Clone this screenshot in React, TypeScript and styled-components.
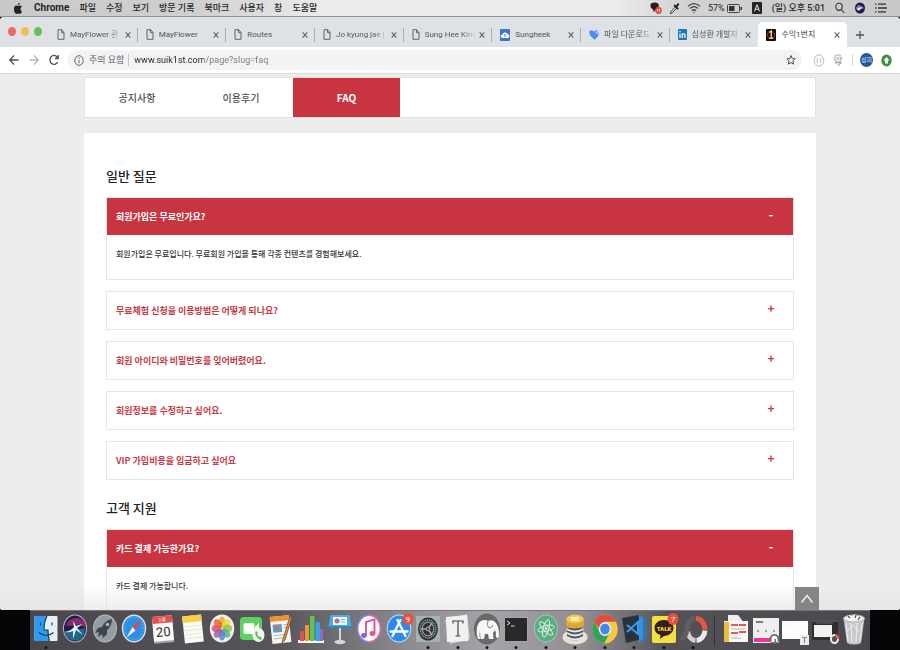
import React, { useState } from "react";
import styled, { createGlobalStyle, css } from "styled-components";

const GlobalStyle = createGlobalStyle`
  *, *::before, *::after { box-sizing: border-box; }
  html, body, #root { height: 100%; }
  body {
    margin: 0;
    overflow: hidden;
    background: #060407;
    font-family: Roboto, "Noto Sans CJK KR", sans-serif;
  }
  button { margin: 0; padding: 0; border: 0; background: none; font: inherit; color: inherit; }
  a { color: inherit; text-decoration: none; }
  svg { display: block; flex: none; }
`;

const Desktop = styled.div`
  display: flex;
  flex-direction: column;
  height: 100vh;
  background: #060407;
`;

/* ---------- menu bar ---------- */

const MenuBar = styled.header`
  display: flex;
  align-items: center;
  justify-content: space-between;
  height: 17px;
  flex: none;
  padding: 0 13px 0 12px;
  background: linear-gradient(90deg, #c9c9c9, #d0d0d0 22%, #ececec 36%, #ededed 68%, #d2d2d2 76%, #c8c8c8);
  border-bottom: 1px solid #8d9390;
  color: #262626;
  font-size: 9px;
  line-height: 16px;
`;

const MenuGroup = styled.nav<{ $gap: number }>`
  display: flex;
  align-items: center;
  gap: ${(p) => p.$gap}px;
  white-space: nowrap;
`;

const MenuItem = styled.button<{ $app?: boolean }>`
  font-size: ${(p) => (p.$app ? 10 : 9)}px;
  font-weight: ${(p) => (p.$app ? 700 : 500)};
  line-height: 16px;
`;

const Battery = styled.span`
  display: flex;
  align-items: center;
  gap: 2px;
`;

/* ---------- browser window ---------- */

const BrowserWindow = styled.div`
  display: flex;
  flex-direction: column;
  flex: 1;
  min-height: 0;
  overflow: hidden;
  border-radius: 4px 4px 3px 3px;
  background: #fff;
`;

const TabStrip = styled.div`
  display: flex;
  height: 30px;
  flex: none;
  padding-top: 5px;
  background: #dee1e6;
`;

const Lights = styled.div`
  display: flex;
  gap: 5px;
  width: 49px;
  flex: none;
  padding: 5px 0 0 8px;
`;

const Light = styled.button<{ $color: string }>`
  width: 8px;
  height: 9px;
  border-radius: 50%;
  background: ${(p) => p.$color};
`;

const TabList = styled.div`
  display: flex;
  flex: 1;
  min-width: 0;
`;

const Tab = styled.div<{ $active?: boolean; $rule?: boolean }>`
  display: flex;
  align-items: center;
  flex: 1 1 0;
  min-width: 0;
  padding: 0 6px 0 8px;
  color: #55585d;
  ${(p) =>
    p.$rule &&
    css`
      background: linear-gradient(#a9adb2, #a9adb2) right 6px / 1px 14px no-repeat;
    `}
  ${(p) =>
    p.$active &&
    css`
      background: #fff;
      color: #3c4043;
      border-radius: 5px 5px 0 0;
    `}
`;

const TabTitle = styled.button<{ $faded?: boolean }>`
  flex: 1;
  min-width: 0;
  margin: 0 1px 0 5px;
  overflow: hidden;
  white-space: nowrap;
  text-align: left;
  font-size: 8px;
  line-height: 14px;
  ${(p) => p.$faded && css`mask-image: linear-gradient(90deg, #000 70%, transparent);`}
`;

const CloseButton = styled.button`
  width: 8px;
  height: 10px;
  flex: none;
`;

const NewTab = styled.button`
  display: grid;
  place-items: center;
  width: 26px;
  height: 25px;
  margin-right: 27px;
  flex: none;
`;

const Toolbar = styled.div`
  display: flex;
  align-items: center;
  height: 27px;
  flex: none;
  padding: 0 8px;
  background: #fff;
  border-bottom: 1px solid #dcdcdc;
`;

const NavButtons = styled.div`
  display: flex;
  gap: 8px;
  width: 59px;
  flex: none;
`;

const AddressBar = styled.div`
  display: flex;
  align-items: center;
  flex: 1;
  min-width: 0;
  height: 20px;
  padding: 0 6px 0 7px;
  border-radius: 10px;
  background: #f1f3f4;
`;

const SiteInfo = styled.button`
  display: flex;
  align-items: center;
  gap: 5px;
  padding-right: 4px;
  border-right: 1px solid #c3c5c8;
  color: #5f6368;
  font-size: 9px;
  line-height: 12px;
  white-space: nowrap;
`;

const UrlInput = styled.input`
  flex: 1;
  min-width: 0;
  margin: 0 0 0 5px;
  padding: 0;
  border: 0;
  outline: 0;
  font: 9px/16px Roboto, sans-serif;
  color: transparent;
  background: linear-gradient(90deg, #202124 70px, #75787c 70px);
  -webkit-background-clip: text;
  background-clip: text;
`;

const Extensions = styled.div`
  display: flex;
  align-items: center;
  gap: 8px;
  padding-left: 11px;
`;

const Rule = styled.span`
  width: 1px;
  height: 12px;
  margin: 0 -1px 0 1px;
  background: #d5d7d9;
`;

const Profile = styled.button`
  width: 13px;
  height: 14px;
  border-radius: 50%;
  background: #2259a0;
  color: #d9e6f5;
  font-size: 6px;
  line-height: 14px;
`;

/* ---------- web page ---------- */

const Page = styled.main`
  position: relative;
  flex: 1;
  min-height: 0;
  overflow: hidden;
  padding: 3px 84px 0;
  background: #ededed;
  font-family: "Noto Sans CJK KR", sans-serif;
  &::after {
    content: "";
    position: absolute;
    inset: auto 0 0;
    height: 26px;
    background: linear-gradient(rgba(226, 226, 226, 0), rgba(226, 226, 226, 0.6));
    pointer-events: none;
  }
`;

const SectionNav = styled.nav`
  display: flex;
  height: 41px;
  border: 1px solid #e2e2e2;
  background: #fff;
`;

const SectionLink = styled.a<{ $active?: boolean }>`
  display: grid;
  place-items: center;
  width: ${(p) => (p.$active ? 107 : 104)}px;
  background: ${(p) => (p.$active ? "#c83541" : "transparent")};
  color: ${(p) => (p.$active ? "#fff" : "#505050")};
  font-size: 10px;
  font-weight: ${(p) => (p.$active ? 700 : 500)};
  line-height: 16px;
`;

const Panel = styled.section`
  margin-top: 15px;
  padding: 31px 22px 60px;
  background: #fff;
`;

const GroupTitle = styled.h2`
  margin: 0;
  padding-bottom: 9px;
  color: #222;
  font-size: 13px;
  font-weight: 500;
  line-height: 24px;
`;

const Group = styled.div`
  & + & { margin-top: 16px; }
`;

const Items = styled.div`
  display: flex;
  flex-direction: column;
  gap: 11px;
`;

const Item = styled.div`
  border: 1px solid #e6e6e6;
`;

const Question = styled.button<{ $open: boolean }>`
  display: flex;
  align-items: center;
  justify-content: space-between;
  width: 100%;
  height: 37px;
  padding: 0 18px 0 9px;
  background: ${(p) => (p.$open ? "#c83541" : "#fff")};
  color: ${(p) => (p.$open ? "#fff" : "#c83c46")};
  font-size: 9px;
  font-weight: 700;
  line-height: 16px;
  text-align: left;
`;

const Sign = styled.span`
  width: 8px;
  padding-bottom: 5px;
  font-size: 12px;
  text-align: center;
`;

const Answer = styled.p`
  margin: 0;
  padding: 10px 9px 17px;
  color: #333;
  font-size: 8px;
  font-weight: 500;
  line-height: 17px;
`;

const TopButton = styled.button`
  position: absolute;
  right: 81px;
  bottom: 0;
  z-index: 1;
  display: grid;
  place-items: center;
  width: 24px;
  height: 23px;
  background: #858585;
`;

/* ---------- dock ---------- */

const Dock = styled.nav`
  display: flex;
  height: 40px;
  flex: none;
  margin: 0 30px;
  padding: 0 1px;
  border-top: 1px solid #77757a;
  background: linear-gradient(90deg, #4a474c, #59565b 30%, #8d8a90 45%, #a5a2a8 55%, #908d92 66%, #555257 76%, #4b484d);
`;

const DockItem = styled.button`
  display: flex;
  justify-content: center;
  flex: 1 1 0;
  min-width: 0;
`;

const DockDivider = styled.span`
  width: 14px;
  flex: none;
  background: linear-gradient(#353337, #353337) center 5px / 1px 30px no-repeat;
`;

/* ---------- small icons ---------- */

const DocIcon = () => (
  <svg width="8" height="11" viewBox="0 0 8 11" fill="none" stroke="#5f6368" strokeWidth="1">
    <path d="M1 .7h3.6L7 3.4v6.9H1zM4.5.8v2.9H7" />
  </svg>
);
const CloudIcon = () => (
  <svg width="10" height="12" viewBox="0 0 10 12">
    <rect width="10" height="12" rx="1" fill="#3978c6" />
    <path d="M2.5 9a1.8 1.8 0 0 1 0-3.6A2.6 2.6 0 0 1 7.3 5 2 2 0 0 1 7.5 9z" fill="#fff" />
    <path d="M5 8V5.6M4 6.6l1-1.2 1 1.2" stroke="#3978c6" strokeWidth=".8" fill="none" />
  </svg>
);
const BirdIcon = () => (
  <svg width="10" height="12" viewBox="0 0 10 12">
    <path d="M0 3Q1 .5 3 1.5l2 1L7.5.8 9.8 4 9 7.5 5.5 10.8 1.5 7z" fill="#4d8df6" />
    <path d="M6.5 2.8 8 1.4 9.4 5H7z" fill="#a8c8fd" />
  </svg>
);
const LinkedInIcon = () => (
  <svg width="9" height="11" viewBox="0 0 9 11">
    <rect width="9" height="11" rx="1" fill="#1c78b8" />
    <path d="M2 4.5V9M2 2v1.2M4.2 9V4.5M4.2 6.2c.3-1.8 2.8-1.9 2.8.2V9" stroke="#fff" strokeWidth="1.2" fill="none" />
  </svg>
);
const OneIcon = () => (
  <svg width="10" height="12" viewBox="0 0 10 12">
    <rect width="10" height="12" rx="1" fill="#100b08" />
    <circle cx="5" cy="6" r="3.7" fill="none" stroke="#a6251d" strokeWidth="1" />
    <path d="M3.2 3.3 5.3 2v7M3.2 9.2h4" stroke="#f2cf54" strokeWidth="1.5" fill="none" />
  </svg>
);
const CrossIcon = () => (
  <svg width="8" height="10" viewBox="0 0 8 10" stroke="#5f6368" strokeWidth="1.1">
    <path d="M1.7 2.4 6.3 7.6M6.3 2.4 1.7 7.6" />
  </svg>
);
const AppleIcon = () => (
  <svg width="12" height="13" viewBox="0 0 10 13" fill="#222">
    <path d="M6.8.8C6.8 2.2 6 3.1 4.8 3.1 4.8 1.9 5.6 1 6.8.8zM8.9 9.5C8.4 10.9 7.6 12 6.9 12c-.7 0-1-.4-1.8-.4s-1.2.4-1.8.4C2.2 12 .9 9.6.9 7.1.9 4.9 2.1 3.6 3.4 3.6c.7 0 1.2.5 1.8.5.5 0 1.1-.5 2-.5.6 0 1.200.3 1.600 1C7 5.800 7.200 8.700 8.900 9.500z" />
  </svg>
);
const SiriMark = () => (
  <svg width="10" height="12" viewBox="0 0 10 12">
    <ellipse cx="5" cy="6" rx="5" ry="5.6" fill="#211c49" />
    <path d="M1 6Q3 2 6 4t3 2Q6 7 4 8T1 6" fill="#38b5d6" />
    <path d="M2 4Q5 2 7 5L4 7z" fill="#c44ba8" />
    <path d="M2 7q3-3 6-1-3 0-4 3z" fill="#e9f7ff" />
  </svg>
);

const StatusIcons = {
  talk: (
    <svg width="12" height="12" viewBox="0 0 12 12">
      <path d="M1 1.5Q5-.5 8 1.5 10 4 7.5 7L5 8.5 3.5 10.5V8Q-1 6 1 1.5" fill="#35181b" />
      <ellipse cx="8.5" cy="8.3" rx="3.2" ry="3.6" fill="#df4b3f" />
      <path d="M7.4 9.8V7l1.1 1.3L9.6 7v2.8" stroke="#fff" strokeWidth=".6" fill="none" />
    </svg>
  ),
  dropper: (
    <svg width="11" height="13" viewBox="0 0 11 13">
      <path d="m6.5 4.500-4.500 5-.7 2.200 2-.8L7.800 6" fill="#ddd" stroke="#333" strokeWidth=".9" />
      <path d="M5.800 3.600 8.600 6.600M7.200 4.800l2-2.600" stroke="#222" strokeWidth="2" strokeLinecap="round" />
    </svg>
  ),
  wifi: (
    <svg width="14" height="12" viewBox="0 0 14 12" fill="none" stroke="#444" strokeWidth="1.2">
      <path d="M1 4.200Q7-1 13 4.200M3 6.500q4-3.600 8 0M4.900 8.700q2.100-1.900 4.200 0" />
      <circle cx="7" cy="10.4" r=".7" fill="#444" stroke="none" />
    </svg>
  ),
  battery: (
    <svg width="15" height="9" viewBox="0 0 15 9">
      <rect x=".5" y=".5" width="12" height="8" rx="1" fill="none" stroke="#444" />
      <path d="M2 2h5.500v5H2zM13.500 3H15v3h-1.500z" fill="#333" />
    </svg>
  ),
  inputMode: (
    <svg width="10" height="12" viewBox="0 0 10 12">
      <rect width="10" height="12" rx="1" fill="#252525" />
      <path d="M2.500 9.300 5 2.700l2.500 6.600M3.400 7.200h3.200" stroke="#e8e8e8" fill="none" />
    </svg>
  ),
  search: (
    <svg width="10" height="12" viewBox="0 0 10 12" fill="none" stroke="#333" strokeWidth="1.1">
      <ellipse cx="4" cy="4.8" rx="3.2" ry="3.6" />
      <path d="m6.300 7.500 3 3.500" />
    </svg>
  ),
  list: (
    <svg width="12" height="10" viewBox="0 0 12 10" stroke="#333" strokeWidth="1.3">
      <path d="M0 1.200h1.500M3 1.200h8M0 5h1.500M3 5h9M0 8.800h1.500M3 8.800h8" />
    </svg>
  ),
};

const NavIcon = ({ d, color }: { d: string; color: string }) => (
  <svg width="12" height="14" viewBox="0 0 12 14" fill="none" stroke={color} strokeWidth="1.3">
    <path d={d} />
  </svg>
);

/* ---------- dock icons, each on a 30 by 39 field ---------- */

const Badge = ({ n, x }: { n: string; x: number }) => (
  <g>
    <ellipse cx={x} cy="8" rx="5.5" ry="6" fill="#e9503f" />
    <text x={x} y="11" fill="#fff" fontSize="8" textAnchor="middle" fontFamily="Roboto">{n}</text>
  </g>
);

const petals = ["#f3a52e", "#e8dd3a", "#95c83f", "#54b58f", "#5588cc", "#9467b4", "#d84d7b", "#ed6434"];

const apps: { name: string; running?: boolean; art: React.ReactNode }[] = [
  {
    name: "Finder",
    running: true,
    art: (
      <g>
        <rect x="3.500" y="5" width="23" height="25" rx="1" fill="#e7eff7" />
        <path d="M4.500 5H16q-3 6-3 14h4q0 7 1.500 11h-14q-1 0-1-1V6q0-1 1-1" fill="#2d9bf1" />
        <path d="M9.500 11.500v3M21 11.500v3M8 21.500q7 6 14.500 0M16 5q-3 6-3 14h4q0 7 1.500 11" fill="none" stroke="#17384f" strokeWidth="1.100" />
      </g>
    ),
  },
  {
    name: "Siri",
    art: (
      <g>
        <ellipse cx="15" cy="17.500" rx="12" ry="14" fill="#b9b9c4" />
        <ellipse cx="15" cy="17.500" rx="11" ry="13" fill="#251b48" />
        <path d="M5.500 14Q9 6 18 7t7 10q-5-5-10-3T5.500 14" fill="#a03080" opacity=".75" />
        <path d="M4.500 20q7 1 10.500-3 5 2 10 0 0 9-5 11.500t-10 0T4.500 20" fill="#1f7396" opacity=".85" />
        <path d="M5 21q6-1 9-5l-1-6 3 5 7-2-6 4 6 7-7-5-3 9v-8q-4 2-8 1" fill="#d6f6fa" />
      </g>
    ),
  },
  {
    name: "Launchpad",
    art: (
      <g>
        <ellipse cx="15" cy="17.500" rx="12" ry="14" fill="#b3babd" />
        <ellipse cx="15" cy="17.500" rx="11" ry="13" fill="#949da1" />
        <path d="M22 8q-7 1-10 8l-4 1-3 5 4-1-1 5 4-3 1 4 4-4v-4q5-4 5-11" fill="#3d464c" />
        <circle cx="17.500" cy="13.500" r="1.800" fill="#aab3b7" />
      </g>
    ),
  },
  {
    name: "Safari",
    art: (
      <g>
        <ellipse cx="15" cy="17.500" rx="12.200" ry="14" fill="#dce2e6" />
        <ellipse cx="15" cy="17.500" rx="10.800" ry="12.600" fill="#2b8fe3" />
        <ellipse cx="15" cy="17.500" rx="9" ry="10.800" fill="none" stroke="#9dd0f6" strokeDasharray=".7 1.700" />
        <path d="M22.500 8.500 16.500 19.500 13.500 16z" fill="#ee4438" />
        <path d="M7.500 26.500 13.500 16l3 3.500z" fill="#f4f4f4" />
      </g>
    ),
  },
  {
    name: "Calendar",
    art: (
      <g transform="rotate(-5 15 18)">
        <rect x="5" y="6" width="20" height="26" fill="#a8a7a8" />
        <rect x="5" y="5" width="20" height="25" fill="#fafafa" />
        <path d="M5 5h20v7H5z" fill="#df514b" />
        <text x="15" y="10.500" fill="#fff" fontSize="5" textAnchor="middle" fontFamily="Noto Sans CJK KR">1월</text>
        <text x="15" y="25.500" fill="#333" fontSize="13" textAnchor="middle" fontFamily="Roboto">20</text>
      </g>
    ),
  },
  {
    name: "Notes",
    art: (
      <g transform="rotate(-6 15 18)">
        <rect x="5.500" y="4.500" width="19" height="27" fill="#fbfaf2" />
        <path d="M5.500 4.500h19V11h-19z" fill="#f6cf4b" />
        <path d="M6 15h18M6 19h18M6 23h18M6 27h18" stroke="#dedbd3" strokeWidth=".6" />
      </g>
    ),
  },
  {
    name: "Photos",
    art: (
      <g>
        <ellipse cx="15" cy="17.500" rx="12.200" ry="14" fill="#f1f0ee" />
        <g transform="translate(15 17.500) scale(.86 1)">
          {petals.map((c, i) => (
            <ellipse key={c} cy="-6.500" rx="3.800" ry="5.500" fill={c} opacity=".85" transform={`rotate(${i * 45})`} />
          ))}
        </g>
      </g>
    ),
  },
  {
    name: "FaceTime",
    art: (
      <g>
        <rect x="3" y="6" width="22" height="23" rx="4" fill="#5cd35f" />
        <rect x="6.500" y="12" width="11" height="11" rx="2" fill="#fff" />
        <path d="m18 16 4-4v11l-4-3z" fill="#fff" />
        <ellipse cx="21.500" cy="24" rx="6" ry="7" fill="#f3f5f3" />
        <path d="M19 20q-2 2 1 6t5 2l-1.500-2.500-1.500.5-2-3 1-1z" fill="#49bf50" />
      </g>
    ),
  },
  {
    name: "Pages",
    art: (
      <g>
        <g transform="rotate(-6 15 18)">
          <rect x="5" y="5" width="19" height="27" fill="#f7f5f1" />
          <path d="M5 5h19v5H5z" fill="#ee912e" />
          <path d="M7 13h9v8H7z" fill="#49a0df" />
          <path d="m8 15 3.500 4 3-4-3-1z" fill="#e76e2c" />
          <path d="M18 14h4M18 17h4M7 24h14M7 27h12" stroke="#b3b3b3" />
        </g>
        <path d="m24 5-7 23-1 4 3-3 7-23z" fill="#e68e31" stroke="#5b4434" strokeWidth=".7" />
      </g>
    ),
  },
  {
    name: "Numbers",
    art: (
      <g>
        <path d="M2 29h26v3H2z" fill="#f5f5f5" />
        <path d="M4 20h4v10H4z" fill="#d85250" />
        <path d="M9 14h4v16H9z" fill="#e99937" />
        <path d="M14 5h4.500v25H14z" fill="#5cc451" />
        <path d="M19.500 11H24v19h-4.500z" fill="#3e9fe1" />
        <path d="M24 18h3v12h-3z" fill="#8f6dc1" />
      </g>
    ),
  },
  {
    name: "Keynote",
    art: (
      <g>
        <path d="M14 15h2v15h-2z" fill="#cbd6df" />
        <ellipse cx="15" cy="31" rx="5.500" ry="2.200" fill="#cfd9e0" />
        <path d="M5.500 4h19l2 12h-23z" fill="#43aee9" />
        <path d="M8 6h14v8H8z" fill="#f5f8fb" />
        <circle cx="12" cy="10" r="2.500" fill="#e95a66" />
        <path d="M12 10V7.500A2.500 2.500 0 0 1 13.500 12z" fill="#519de0" />
        <path d="M16 8.500h4M16 11h4" stroke="#8cb2cf" />
        <path d="M3.500 15h23v2h-23z" fill="#298ac2" />
      </g>
    ),
  },
  {
    name: "iTunes",
    art: (
      <g>
        <ellipse cx="15" cy="17.500" rx="12" ry="14" fill="#8e83e7" />
        <path d="M15 3.500a12 14 0 0 1 0 28z" fill="#e464a5" />
        <ellipse cx="15" cy="17.500" rx="10.600" ry="12.500" fill="#faf8fc" />
        <path d="M12 24V11l8.500-2.500V22" stroke="#d0529a" strokeWidth="1.800" fill="none" />
        <ellipse cx="10" cy="24.500" rx="2.800" ry="2.400" fill="#7d65d8" />
        <ellipse cx="18.500" cy="22.500" rx="2.800" ry="2.400" fill="#ec5273" />
      </g>
    ),
  },
  {
    name: "App Store",
    art: (
      <g>
        <ellipse cx="15" cy="17.500" rx="12.200" ry="14" fill="#cfdbe5" />
        <ellipse cx="15" cy="17.500" rx="11.200" ry="13" fill="#268cf0" />
        <path d="M16.500 9 8.500 25M13.500 9 21.500 25M6.500 20.500h17" stroke="#fff" strokeWidth="2.300" strokeLinecap="round" />
        <Badge n="9" x={24} />
      </g>
    ),
  },
  {
    name: "System Preferences",
    running: true,
    art: (
      <g>
        <rect x="3" y="5" width="24" height="26" fill="#a5b1b8" />
        <ellipse cx="15" cy="18" rx="10" ry="11.500" fill="#2d2f31" />
        <ellipse cx="15" cy="18" rx="7.700" ry="9" fill="none" stroke="#9a9fa2" strokeWidth="1.500" strokeDasharray="1.300 .8" />
        <ellipse cx="15" cy="18" rx="5.700" ry="6.800" fill="none" stroke="#90979b" strokeWidth="1.200" />
        <path d="M15 18H8M15 18l4-6M15 18l4 6" stroke="#a5abaf" strokeWidth="1.500" />
        <circle cx="15" cy="18" r="2" fill="#4c5155" stroke="#a5abaf" />
      </g>
    ),
  },
  {
    name: "Typora",
    running: true,
    art: (
      <g>
        <path d="m2 9 22-6 3 25-20 5z" fill="#cfcfcf" />
        <path d="m3 6 21-2 1.500 26L4 31z" fill="#f2f1f0" />
        <path d="M10 12.500v-2.500h10v2.500M15 10v15M12.500 25h5" stroke="#444" strokeWidth="1.200" fill="none" />
      </g>
    ),
  },
  {
    name: "MAMP",
    running: true,
    art: (
      <g>
        <ellipse cx="15" cy="18" rx="13" ry="15.500" fill="#69696a" />
        <path d="M6 28q-2-5-1-12 2-8 9-7l2 1q5-2 8 2 3 4 3 11 0 4-2 4-2-1-1-5l-1-3-2 3 .5 6h-4.500l-1-5h-3l-1 5H8.500L8 20q-1 4 0 8z" fill="#f7f7f7" />
        <path d="M16 10q-2 4 1 7 3 0 4-3" fill="none" stroke="#69696a" strokeWidth=".8" />
      </g>
    ),
  },
  {
    name: "Terminal",
    running: true,
    art: (
      <g>
        <rect x="3" y="6" width="24" height="25" fill="#a6a6a6" />
        <rect x="4" y="7" width="22" height="23" fill="#28292a" />
        <path d="m6 10 3 2-3 2M10 15h3.500" stroke="#e4e4e4" fill="none" />
      </g>
    ),
  },
  {
    name: "Atom",
    running: true,
    art: (
      <g>
        <ellipse cx="15" cy="17.500" rx="12" ry="14" fill="#99c9ab" />
        <ellipse cx="15" cy="17.500" rx="11" ry="13" fill="#58ae80" />
        <g fill="none" stroke="#e5f4e9" strokeWidth=".9">
          <ellipse cx="15" cy="17.500" rx="2.800" ry="9" transform="rotate(15 15 17.500)" />
          <ellipse cx="15" cy="17.500" rx="2.800" ry="8.500" transform="rotate(75 15 17.500)" />
          <ellipse cx="15" cy="17.500" rx="2.800" ry="9" transform="rotate(135 15 17.500)" />
        </g>
        <circle cx="15" cy="17.500" r="1.300" fill="#fff" />
      </g>
    ),
  },
  {
    name: "Sequel Pro",
    running: true,
    art: (
      <g>
        <ellipse cx="15" cy="26" rx="12.500" ry="7.500" fill="#e6e1d7" />
        <path d="M7 17h16v9q-8 7-16 0z" fill="#54575a" />
        <path d="M6.500 18q8.500 5 17 0M7 22q8 5 16 0M7 26q8 5 16 0" stroke="#e7e9eb" strokeWidth="1.800" fill="none" />
        <path d="M6 7q9-7 18 0v8q-9 5-18 0z" fill="#e0a532" />
        <ellipse cx="15" cy="8" rx="8.500" ry="4.300" fill="#f3ca5b" />
        <path d="M11 6h8v4h-8z" fill="#fff0a3" />
      </g>
    ),
  },
  {
    name: "Chrome",
    running: true,
    art: (
      <g transform="translate(15 18) scale(.87 1)">
        <circle r="14.500" fill="#f5c944" />
        <path d="M-12.600-7.300A14.500 14.500 0 0 1 12.600-7.300H0L-5 2z" fill="#dd4f40" />
        <path d="M-12.600-7.300A14.500 14.500 0 0 0-1 14.500L6 3-6 3z" fill="#2fa357" />
        <circle r="7" fill="#f4f6f8" />
        <circle r="5.500" fill="#4387f0" />
      </g>
    ),
  },
  {
    name: "Visual Studio Code",
    running: true,
    art: (
      <g>
        <path d="m3 7 17-3 4 24-17 4z" fill="#29333d" />
        <path d="m20 4 7 4v20l-6 4z" fill="#2c77bc" />
        <path d="m20 4 4 3v20l-4 5z" fill="#3b8fd4" />
        <path d="m8 14 11 9V11L8 21" fill="none" stroke="#3c9ae4" strokeWidth="2" />
      </g>
    ),
  },
  {
    name: "KakaoTalk",
    running: true,
    art: (
      <g>
        <rect x="3" y="5" width="24" height="27" rx="2" fill="#f6df3e" />
        <path d="M15 9c5.500 0 9.500 3.500 9.500 8s-5 8-9.500 8l-4 3 .5-4C8 23 5.500 20.500 5.500 17c0-4.500 4-8 9.500-8" fill="#35201f" />
        <text x="15" y="20" fill="#f7de3c" fontSize="6" fontWeight="900" textAnchor="middle" fontFamily="Roboto">TALK</text>
        <Badge n="7" x={24} />
      </g>
    ),
  },
  {
    name: "Disk monitor",
    running: true,
    art: (
      <g fill="none" strokeWidth="5">
        <path d="M18 7.500a9 11 0 0 1 9 11" stroke="#e8573d" />
        <path d="M27 19.500a9 11 0 0 1-8.500 10" stroke="#eceaea" />
        <path d="M17.500 29.500a9 11 0 0 1-8-9" stroke="#d1cfd0" />
        <path d="M17 7.500Q10 8 9 18 8 27 2 28" stroke="#605e61" />
      </g>
    ),
  },
];

const windows: { name: string; art: React.ReactNode }[] = [
  {
    name: "Downloads",
    art: (
      <g>
        <path d="M7 4h10l4 5v8H7z" fill="#eeeeee" />
        <rect x="3" y="10" width="24" height="21" fill="#f8f8f8" />
        <path d="M3 11h5v20H3z" fill="#efbb3c" />
        <path d="M10 14h7M10 22h7" stroke="#dd6056" strokeWidth="2" />
        <path d="M18 13h7v2h-7zM18 20h7v2h-7z" fill="#e85646" />
        <path d="M10 18h14M10 27h10" stroke="#b9b4ae" />
      </g>
    ),
  },
  {
    name: "MAMP window",
    art: (
      <g>
        <rect x="2" y="7" width="26" height="25" fill="#eeeeee" />
        <path d="M5 11h7" stroke="#555" strokeWidth="1.500" />
        <path d="M6 20h2M14 20h2M22 20h2" stroke="#888" strokeWidth="1.500" />
        <path d="M3 27h17v4H3z" fill="#e5379c" />
        <circle cx="23.500" cy="28" r="5" fill="#6f6f70" />
        <path d="M20.500 31v-4q1-3 4-2 2 0 2 4v2h-1.500v-3h-1.500v3z" fill="#fff" />
      </g>
    ),
  },
  {
    name: "Typora window",
    art: (
      <g>
        <rect x="2" y="10" width="26" height="18" fill="#fcfdfe" />
        <circle cx="9" cy="13" r=".7" fill="#a4c8e5" />
        <rect x="20" y="24" width="9" height="10" fill="#eeeded" />
        <path d="M22 26.500h5M24.500 26.500V32" stroke="#888" strokeWidth="1.200" />
      </g>
    ),
  },
  {
    name: "Monitor window",
    art: (
      <g>
        <rect x="2" y="9" width="26" height="20" fill="#302d31" />
        <path d="M2 10h26" stroke="#797579" />
        <path d="M4 14h18v12H4z" fill="#f2f1f1" />
        <path d="M6 12h17" stroke="#777" strokeWidth=".8" />
        <ellipse cx="24.500" cy="28" rx="3.500" ry="4" fill="#4f4d50" stroke="#efefef" strokeWidth="2" />
        <path d="M25 24q3.500 0 3.500 4" fill="none" stroke="#e64d36" strokeWidth="2" />
      </g>
    ),
  },
  {
    name: "Trash",
    art: (
      <g>
        <path d="M4.500 7h21l-3.500 25q-7 3-14 0z" fill="#c8c8c9" />
        <ellipse cx="15" cy="7.500" rx="10.500" ry="3.500" fill="#e8e8e8" stroke="#bcbcbd" />
        <path d="m7 7 3-3 3 2 3-3 3 3 4 1-3 2-4-1-4 2z" fill="#fff" />
        <path d="m9 5 2 2M17 4l-1 3M21 6l-2 3" stroke="#44545a" strokeWidth="1.300" />
        <path d="m7 12 2 18M12 12l1 19M18 12l-1 19M23 12l-2 18M8 20l6-6 6 7" stroke="#eeeeee" strokeWidth="1" fill="none" />
      </g>
    ),
  },
];

const DockIcon = ({ art, running }: { art: React.ReactNode; running?: boolean }) => (
  <svg width="30" height="39" viewBox="0 0 30 39">
    {art}
    {running && <circle cx="15" cy="36.500" r="1.500" fill="#161416" />}
  </svg>
);

/* ---------- content ---------- */

const menus = ["파일", "수정", "보기", "방문 기록", "북마크", "사용자", "창", "도움말"];

const tabs: { title: string; icon: React.ReactNode; faded?: boolean }[] = [
  { title: "MayFlower 관", icon: <DocIcon />, faded: true },
  { title: "MayFlower", icon: <DocIcon /> },
  { title: "Routes", icon: <DocIcon /> },
  { title: "Jo kyung jae |", icon: <DocIcon />, faded: true },
  { title: "Sung Hee Kim", icon: <DocIcon />, faded: true },
  { title: "Sungheek", icon: <CloudIcon /> },
  { title: "파일 다운로드 |", icon: <BirdIcon />, faded: true },
  { title: "심성환 개발자 프", icon: <LinkedInIcon />, faded: true },
  { title: "수익1번지", icon: <OneIcon /> },
];

const groups = [
  {
    title: "일반 질문",
    items: [
      { q: "회원가입은 무료인가요?", a: "회원가입은 무료입니다. 무료회원 가입을 통해 각종 컨텐츠를 경험해보세요." },
      { q: "무료체험 신청을 이용방법은 어떻게 되나요?" },
      { q: "회원 아이디와 비밀번호를 잊어버렸어요." },
      { q: "회원정보를 수정하고 싶어요." },
      { q: "VIP 가입비용을 입금하고 싶어요" },
    ],
  },
  { title: "고객 지원", items: [{ q: "카드 결제 가능한가요?", a: "카드 결제 가능합니다." }] },
];

function FaqGroup({ title, items }: { title: string; items: { q: string; a?: string }[] }) {
  const [open, setOpen] = useState(0);
  return (
    <Group>
      <GroupTitle>{title}</GroupTitle>
      <Items>
        {items.map((item, i) => (
          <Item key={item.q}>
            <Question $open={open === i} aria-expanded={open === i} onClick={() => setOpen(open === i ? -1 : i)}>
              {item.q}
              <Sign>{open === i ? "-" : "+"}</Sign>
            </Question>
            {open === i && item.a && <Answer>{item.a}</Answer>}
          </Item>
        ))}
      </Items>
    </Group>
  );
}

export default function App() {
  return (
    <Desktop>
      <GlobalStyle />
      <MenuBar>
        <MenuGroup $gap={10}>
          <MenuItem aria-label="Apple"><AppleIcon /></MenuItem>
          <MenuItem $app>Chrome</MenuItem>
          {menus.map((m) => <MenuItem key={m}>{m}</MenuItem>)}
        </MenuGroup>
        <MenuGroup $gap={10}>
          <MenuGroup as="div" $gap={7}>
            {StatusIcons.talk}
            {StatusIcons.dropper}
            {StatusIcons.wifi}
            <Battery>57%{StatusIcons.battery}</Battery>
          </MenuGroup>
          {StatusIcons.inputMode}
          <MenuItem>(일) 오후 5:01</MenuItem>
          {StatusIcons.search}
          <SiriMark />
          {StatusIcons.list}
        </MenuGroup>
      </MenuBar>

      <BrowserWindow>
        <TabStrip>
          <Lights>
            <Light $color="#ee6a5f" aria-label="닫기" />
            <Light $color="#f5bd4f" aria-label="최소화" />
            <Light $color="#61c454" aria-label="확대" />
          </Lights>
          <TabList>
            {tabs.map((t, i) => (
              <Tab key={t.title} $active={i === 8} $rule={i < 7}>
                {t.icon}
                <TabTitle $faded={t.faded}>{t.title}</TabTitle>
                <CloseButton aria-label="탭 닫기"><CrossIcon /></CloseButton>
              </Tab>
            ))}
          </TabList>
          <NewTab aria-label="새 탭">
            <svg width="10" height="10" viewBox="0 0 10 10" stroke="#555" strokeWidth="1.3">
              <path d="M1 5h8M5 1v8" />
            </svg>
          </NewTab>
        </TabStrip>

        <Toolbar>
          <NavButtons>
            <button aria-label="뒤로"><NavIcon color="#4d5156" d="M10.500 7H2M6 2.500 1.800 7 6 11.500" /></button>
            <button aria-label="앞으로"><NavIcon color="#b8babd" d="M1.500 7H10M6 2.500 10.200 7 6 11.500" /></button>
            <button aria-label="새로고침"><NavIcon color="#4d5156" d="M9.500 9A4 4.500 0 1 1 9 4L10 5.300M10.200 2v3.500H7" /></button>
          </NavButtons>
          <AddressBar>
            <SiteInfo>
              <svg width="10" height="11" viewBox="0 0 10 11" fill="none" stroke="#5f6368">
                <ellipse cx="5" cy="5.500" rx="4.200" ry="4.800" />
                <path d="M5 5v3.200M5 2.800V4" />
              </svg>
              주의 요함
            </SiteInfo>
            <UrlInput aria-label="주소" defaultValue="www.suik1st.com/page?slug=faq" />
            <button aria-label="북마크 추가">
              <svg width="10" height="12" viewBox="0 0 10 12" fill="none" stroke="#4d5156">
                <path d="m5 1.500 1.200 3.100 3 .2-2.300 2.200.7 3.200L5 8.500 2.400 10.200l.7-3.200L.8 4.800l3-.2z" />
              </svg>
            </button>
          </AddressBar>
          <Extensions>
            <svg width="12" height="13" viewBox="0 0 12 13" fill="none" stroke="#b9b9b9">
              <ellipse cx="6" cy="6.500" rx="4.800" ry="5.600" />
              <path d="M4.500 4q-1 2.500 0 5M7.500 4q1 2.500 0 5" />
            </svg>
            <svg width="10" height="13" viewBox="0 0 10 13" fill="none" stroke="#b0b0b0">
              <ellipse cx="5" cy="4.500" rx="3.200" ry="3.500" strokeWidth="1.600" strokeDasharray="1.500 .6" />
              <circle cx="5" cy="4.500" r="1" />
              <path d="M2 9q4-1 6 0L5 11.500" strokeWidth="1.500" />
            </svg>
            <Rule />
            <Profile aria-label="프로필">성희</Profile>
            <svg width="11" height="13" viewBox="0 0 11 13">
              <ellipse cx="5.500" cy="6.500" rx="5.200" ry="6" fill="#3f8f44" />
              <path d="M5.500 3 8.500 6.500H7v3H4v-3H2.500z" fill="#fff" />
            </svg>
          </Extensions>
        </Toolbar>

        <Page>
          <SectionNav>
            <SectionLink href="#notice">공지사항</SectionLink>
            <SectionLink href="#review">이용후기</SectionLink>
            <SectionLink href="#faq" $active>FAQ</SectionLink>
          </SectionNav>
          <Panel>
            {groups.map((g) => <FaqGroup key={g.title} {...g} />)}
          </Panel>
          <TopButton aria-label="맨 위로">
            <svg width="14" height="10" viewBox="0 0 14 10" fill="none" stroke="#eee" strokeWidth="1.5">
              <path d="m1.500 8.500 5.500-7 5.500 7" />
            </svg>
          </TopButton>
        </Page>
      </BrowserWindow>

      <Dock>
        {apps.map((a) => (
          <DockItem key={a.name} aria-label={a.name}><DockIcon art={a.art} running={a.running} /></DockItem>
        ))}
        <DockDivider />
        {windows.map((w) => (
          <DockItem key={w.name} aria-label={w.name}><DockIcon art={w.art} /></DockItem>
        ))}
      </Dock>
    </Desktop>
  );
}
